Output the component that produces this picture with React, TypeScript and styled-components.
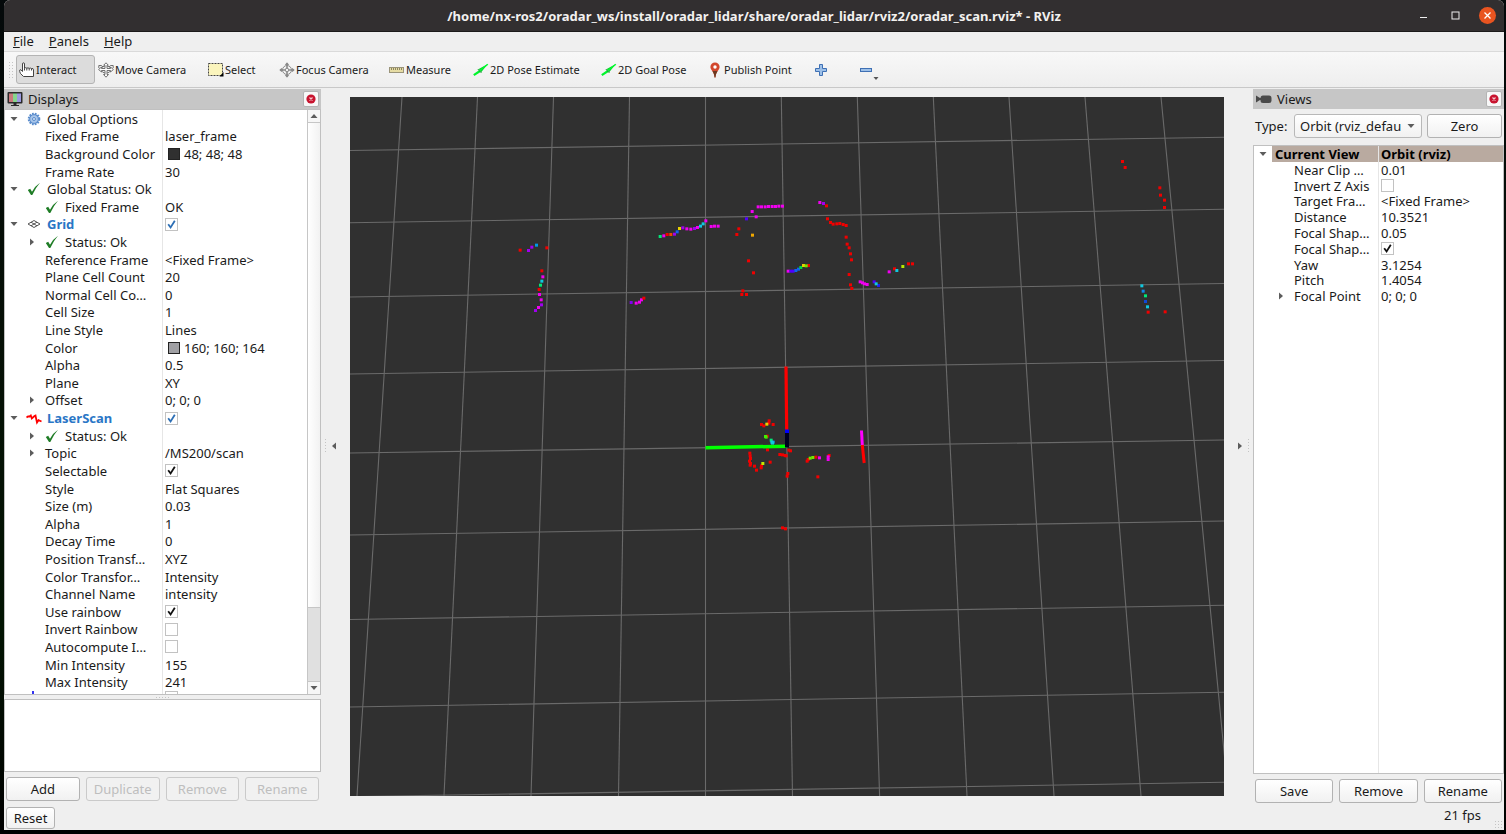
import React from "react";
import styled, { createGlobalStyle, css } from "styled-components";

const sans = `"Noto Sans", "Open Sans", "Liberation Sans", sans-serif`;

const GlobalStyle = createGlobalStyle`
  *, *::before, *::after { box-sizing: border-box; }
  html, body, #root { height: 100%; }
  body {
    margin: 0;
    background: #000;
    color: #1a1a1a;
    font: 13px/16px ${sans};
  }
  button, input, select { font: inherit; color: inherit; margin: 0; }
`;

/* ---------- window frame ---------- */

const Desktop = styled.div`
  display: flex;
  min-height: 100vh;
  padding: 0 2px 4px 4px;
  background: linear-gradient(180deg, #04090a 0%, #061006 40%, #021402 75%, #000 100%);
`;

const Window = styled.div`
  flex: 1;
  min-width: 0;
  display: flex;
  flex-direction: column;
  background: #efefef;
  border-radius: 6px 6px 0 0;
  overflow: hidden;
`;

const TitleBar = styled.header`
  display: grid;
  grid-template-columns: 90px 1fr 90px;
  align-items: center;
  height: 32px;
  background: #322f30;
  border-bottom: 1px solid #1c1a1a;
  color: #f2f1ef;
`;

const Title = styled.h1`
  grid-column: 2;
  margin: 0;
  text-align: center;
  white-space: nowrap;
  font-size: 13px;
  line-height: 18px;
  font-weight: 700;
`;

const WindowButtons = styled.div`
  display: flex;
  justify-content: flex-end;
  gap: 15px;
  padding-right: 8px;
`;

const WindowButton = styled.button<{ $close?: boolean }>`
  display: grid;
  place-items: center;
  width: 17px;
  height: 17px;
  padding: 0;
  border: 0;
  border-radius: 50%;
  background: ${(p) => (p.$close ? "#e95420" : "transparent")};
`;

const MenuBar = styled.nav`
  display: flex;
  gap: 15px;
  height: 20px;
  padding: 0 9px;
  border-bottom: 1px solid #dadada;
`;

const MenuItem = styled.button`
  padding: 0;
  border: 0;
  background: none;
  line-height: 19px;

  &::first-letter { text-decoration: underline; }
`;

const ToolBar = styled.div`
  display: flex;
  align-items: center;
  height: 36px;
  padding-left: 4px;
  background: linear-gradient(#f8f8f8, #eeeeee);
  border-bottom: 1px solid #c8c8c8;

  > :first-child { margin-right: 2px; }
`;

const Grip = styled.span<{ $w: number; $h: number }>`
  flex: none;
  width: ${(p) => p.$w}px;
  height: ${(p) => p.$h}px;
  background: radial-gradient(circle, #c4c4c4 1px, transparent 1px) 0 0 / 3px 3px;
`;

const ToolButton = styled.button<{ $w: number; $on?: boolean }>`
  position: relative;
  display: flex;
  align-items: center;
  gap: 1px;
  flex: none;
  width: ${(p) => p.$w}px;
  height: 29px;
  padding: 0 2px;
  border: 1px solid ${(p) => (p.$on ? "#b4b4b4" : "transparent")};
  border-radius: 3px;
  background: ${(p) => (p.$on ? "#dcdcdc" : "none")};
  font-size: 11px;
  white-space: nowrap;
  text-align: left;

  svg { flex: none; }
`;

const Corner = styled.svg`
  position: absolute;
  right: 1px;
  bottom: 2px;
`;

const Body = styled.div`
  flex: 1;
  min-height: 0;
  display: grid;
  grid-template-columns: 317px 29px 1fr 29px 251px;
`;

/* ---------- docks ---------- */

const Dock = styled.section<{ $bottom?: number }>`
  display: flex;
  flex-direction: column;
  min-width: 0;
  min-height: 0;
  padding-top: 1px;
  padding-bottom: ${(p) => p.$bottom ?? 0}px;
`;

const DockTitle = styled.header`
  display: flex;
  align-items: center;
  gap: 5px;
  flex: none;
  height: 20px;
  padding: 0 2px 0 3px;
  background: #c6c6c6;
`;

const DockName = styled.h2`
  flex: 1;
  margin: 0;
  font-size: 13px;
  line-height: 18px;
  font-weight: 400;
`;

const DockClose = styled.button`
  display: grid;
  place-items: center;
  width: 16px;
  height: 16px;
  padding: 0;
  border: 1px solid #b4b4b4;
  border-radius: 2px;
  background: #f8f8f8;
`;

const TreeFrame = styled.div`
  flex: 1;
  min-height: 0;
  display: flex;
  border: 1px solid #c0c0c0;
  background: #fff;
  overflow: hidden;
`;

const Tree = styled.div<{ $split: number }>`
  flex: 1;
  min-width: 0;
  display: flex;
  flex-direction: column;
  background: linear-gradient(#e6e6e6, #e6e6e6) ${(p) => p.$split - 1}px 0 / 1px 100% no-repeat;
`;

const Rows = styled.div<{ $height?: number }>`
  ${(p) => (p.$height ? css`flex: none; height: ${p.$height}px;` : css`flex: 1; min-height: 0;`)}
  display: grid;
  grid-auto-rows: minmax(0, 1fr);
`;

const Row = styled.div<{ $split: number }>`
  display: grid;
  grid-template-columns: ${(p) => p.$split}px minmax(0, 1fr);
  align-items: stretch;
  white-space: nowrap;
`;

const NameCell = styled.div<{ $strong?: boolean; $depth: 0 | 1 }>`
  display: flex;
  align-items: center;
  min-width: 0;
  padding-left: ${(p) => (p.$depth === 0 ? 5 : 23)}px;
  ${(p) => p.$strong && css`font-weight: 700; color: #2a76c6;`}
`;

const Selected = styled.span`
  flex: 1;
  align-self: stretch;
  display: flex;
  align-items: center;
  padding-left: 3px;
  margin-right: 1px;
  background: #b9aaa0;
  color: #000;
`;

const ValueCell = styled.div<{ $selected?: boolean }>`
  display: flex;
  align-items: center;
  min-width: 0;
  padding-left: 2px;
  ${(p) => p.$selected && css`background: #b9aaa0; color: #000; font-weight: 700;`}
`;

const ArrowSlot = styled.span<{ $gap: number }>`
  flex: none;
  display: grid;
  place-items: center;
  width: 8px;
  height: 8px;
  margin-right: ${(p) => p.$gap}px;
`;

const IconSlot = styled.span`
  flex: none;
  display: grid;
  place-items: center;
  width: 16px;
  height: 14px;
  margin-right: 5px;
`;

const Swatch = styled.span<{ $color: string }>`
  width: 12px;
  height: 12px;
  margin: 0 4px 0 3px;
  border: 1px solid #222;
  background: ${(p) => p.$color};
`;

const CheckWrap = styled.label`
  display: inline-grid;
  width: 13px;
  height: 13px;

  > * { grid-area: 1 / 1; }
  svg { pointer-events: none; }
`;

const CheckInput = styled.input`
  appearance: none;
  width: 13px;
  height: 13px;
  border: 1px solid #c2c2c2;
  background: #fff;
`;

const PartialRow = styled.div<{ $split: number }>`
  flex: none;
  display: grid;
  grid-template-columns: ${(p) => p.$split}px 1fr;
  height: 3px;
  overflow: hidden;
  padding-left: 2px;
`;

const AxesTip = styled.span`
  width: 2px;
  height: 3px;
  margin-left: 25px;
  background: #3434f0;
`;

const ScrollBar = styled.div`
  flex: none;
  display: grid;
  grid-template-rows: 12px 1fr 74px 12px;
  width: 13px;
  border-left: 1px solid #c6c6c6;
`;

const ScrollEnd = styled.button`
  display: grid;
  place-items: center;
  padding: 0;
  border: 0;
  background: #f6f6f6;
`;

const ScrollThumb = styled.div`
  border: solid #c6c6c6;
  border-width: 1px 0;
  background: linear-gradient(90deg, #fff, #f2f2f2);
`;

const ScrollGroove = styled.div`
  border-bottom: 1px solid #c6c6c6;
  background: #e0e0e0;
`;

const SplitHandle = styled.div`
  flex: none;
  display: grid;
  place-items: center;
  height: 4px;
`;

const HelpBox = styled.div`
  flex: none;
  height: 73px;
  border: 1px solid #c0c0c0;
  background: #fff;
`;

const ButtonRow = styled.div`
  display: grid;
  grid-auto-flow: column;
  grid-auto-columns: minmax(0, 1fr);
  gap: 6px;
  padding: 5px 2px 0 2px;
`;

const PushButton = styled.button<{ $small?: boolean }>`
  width: ${(p) => (p.$small ? "49px" : "100%")};
  height: ${(p) => (p.$small ? 22 : 24)}px;
  padding: 0;
  border: 1px solid #b2b2b2;
  border-radius: 3px;
  background: linear-gradient(#ffffff, #f1f1f1);
  line-height: 20px;
  text-align: center;

  &:disabled {
    border-color: #cacaca;
    background: #f1f1f1;
    color: #bebebe;
  }
`;

const TypeRow = styled.div`
  display: grid;
  grid-template-columns: 34px 128px 1fr;
  align-items: center;
  gap: 5px;
  padding: 5px 2px 7px 2px;
`;

const SelectWrap = styled.div`
  display: grid;
  align-items: center;

  > * { grid-area: 1 / 1; }
  svg { justify-self: end; margin-right: 7px; pointer-events: none; }
`;

const Select = styled.select`
  appearance: none;
  width: 100%;
  height: 24px;
  padding: 0 20px 0 5px;
  border: 1px solid #b8b8b8;
  border-radius: 3px;
  background: linear-gradient(#ffffff, #f1f1f1);
`;

const SideHandle = styled.div<{ $side: "left" | "right" }>`
  display: flex;
  flex-direction: ${(p) => (p.$side === "left" ? "row" : "row-reverse")};
  align-items: center;
  justify-content: flex-start;
  gap: 3px;
  padding: 0 3px;
`;

const HandleButton = styled.button`
  display: grid;
  place-items: center;
  padding: 0;
  border: 0;
  width: 8px;
  height: 24px;
  background: none;
`;

const CenterColumn = styled.main`
  display: grid;
  min-height: 0;
  min-width: 0;
  padding: 9px 0 7px;
`;

const Viewport = styled.svg`
  display: block;
  width: 100%;
  height: 100%;
  min-height: 0;
  background: #303030;
`;

const StatusBar = styled.footer`
  display: flex;
  justify-content: space-between;
  align-items: flex-start;
  flex: none;
  height: 27px;
  padding: 4px 1px 1px 2px;
`;

const StatusEnd = styled.div`
  align-self: stretch;
  display: flex;
  align-items: flex-start;
  gap: 13px;

  > :last-child { align-self: flex-end; }
`;

/* ---------- icons ---------- */

const Arrow = ({ dir }: { dir: "down" | "right" | "left" | "up" }) => {
  const d = {
    down: "M0.5 2H7.5L4 6Z",
    up: "M0.5 6H7.5L4 2Z",
    right: "M2 0.5V7.5L6 4Z",
    left: "M6 0.5V7.5L2 4Z",
  }[dir];
  return (
    <svg width="8" height="8" viewBox="0 0 8 8" aria-hidden="true">
      <path d={d} fill="#5c5c5c" />
    </svg>
  );
};

const HandIcon = () => (
  <svg width="16" height="16" viewBox="0 0 16 16" fill="#fff" stroke="#444" strokeWidth="1" strokeLinejoin="round">
    <path d="M3.500 9.500V2Q3.500 .8 4.500 .8T5.500 2V6.200Q6.700 5.200 7.800 6.200 9 5.400 10.200 6.400 11.300 5.600 12.500 6.600 14.500 6 14.500 7.800V14.500H4.500L1.500 11.500Q.3 9.500 .8 8T3.500 9.500Z" />
    <path d="M5.500 6.200V8.500M7.800 6.200V8.500M10.200 6.400V8.500M12.500 6.600V8.500" fill="none" />
  </svg>
);

const MoveIcon = () => (
  <svg width="16" height="16" viewBox="0 0 16 16" fill="#fff" stroke="#707070" strokeWidth="1">
    <ellipse cx="8" cy="7.500" rx="5" ry="3.500" fill="none" />
    <path d="M8 .8 10.300 3.200H9V6.500H12.500V5L15.400 7.500 12.500 10V8.500H9V12.500H10.500L8 15.200 5.500 12.500H7V8.500H3.500V10L.6 7.500 3.500 5V6.500H7V3.200H5.700Z" />
    <path d="M.8 3.500H3.500L5 5M15.200 3.500H12.500L11 5M.8 3.500V6M15.200 3.500V6" fill="none" />
  </svg>
);

const SelectIcon = () => (
  <svg width="16" height="16" viewBox="0 0 16 16">
    <rect x=".5" y="1.500" width="14" height="12" fill="#fbf5bd" stroke="#444" strokeDasharray="2 1" />
    <path d="M15.500 10V14.500H11.500Z" fill="#000" />
  </svg>
);

const FocusIcon = () => (
  <svg width="16" height="16" viewBox="0 0 16 16" fill="none" stroke="#8a8a8a" strokeWidth="1">
    <circle cx="8" cy="8" r="4.500" />
    <circle cx="8" cy="8" r="1.800" />
    <path d="M8 1V6.500M8 9.500V15M1 8H6.500M9.500 8H15" strokeWidth="1.600" />
    <path d="M6.500 2.500 8 .8 9.500 2.500ZM6.500 13.500 8 15.200 9.500 13.500ZM2.500 6.500.8 8 2.500 9.500ZM13.500 6.500 15.200 8 13.500 9.500Z" fill="#a4a4a4" />
  </svg>
);

const RulerIcon = () => (
  <svg width="16" height="16" viewBox="0 0 16 16">
    <rect x=".5" y="5.500" width="14" height="5" fill="#e6dca4" stroke="#9a947a" />
    <path d="M2.500 6V8M4.500 6V8M6.500 6V8M8.500 6V8M10.500 6V8M12.500 6V8" stroke="#8c8660" />
  </svg>
);

const PoseIcon = () => (
  <svg width="16" height="16" viewBox="0 0 16 16">
    <path d="M.8 13.200 7 9" stroke="#00f52c" strokeWidth="2.200" />
    <path d="M14.800 2 4.800 7.500 7 8 8 10.500Z" fill="#0cd030" />
    <path d="M5 7.300 8.300 10.800" stroke="#0a8c28" strokeWidth="1" />
    <path d="M14.800 2.200 7 8.500" stroke="#00ff2e" strokeWidth="1.400" />
  </svg>
);

const PinIcon = () => (
  <svg width="16" height="16" viewBox="0 0 16 16">
    <path d="M8 .5A4.600 4.600 0 0 0 3.400 5.100C3.400 8 7 9.500 7.600 15.500H8.400C9 9.500 12.600 8 12.600 5.100A4.600 4.600 0 0 0 8 .5Z" fill="#d2472d" />
    <path d="M5.500 9Q7 11 7.600 15.500H8.400Q9 11 10.500 9Z" fill="#6b3a22" />
    <circle cx="8" cy="5" r="1.700" fill="#fff" />
  </svg>
);

const PlusIcon = () => (
  <svg width="16" height="16" viewBox="0 0 16 16">
    <path d="M6.500 2.500H9.500V6.500H13.500V9.500H9.500V13.500H6.500V9.500H2.500V6.500H6.500Z" fill="#9dc0e8" stroke="#3f70b4" />
  </svg>
);

const MinusIcon = () => (
  <svg width="16" height="16" viewBox="0 0 16 16">
    <rect x="2.500" y="6.500" width="11" height="3" fill="#9dc0e8" stroke="#3f70b4" />
  </svg>
);

const MonitorIcon = () => (
  <svg width="16" height="16" viewBox="0 0 16 16">
    <rect x=".5" y="1" width="15" height="11.500" rx="1" fill="#2a2a2a" />
    <rect x="2" y="2.500" width="4" height="8.500" fill="#c9797c" />
    <rect x="6" y="2.500" width="4" height="8.500" fill="#86d58c" />
    <rect x="10" y="2.500" width="4" height="8.500" fill="#9c99e0" />
    <path d="M6.500 12H9.500V14H12V15H4V14H6.500Z" fill="#2a2a2a" />
  </svg>
);

const CameraIcon = () => (
  <svg width="16" height="16" viewBox="0 0 16 16" fill="#4a4a4a">
    <path d="M0 4.500 4 7V9L0 11.500Z" />
    <rect x="4.500" y="4.500" width="11" height="7.500" rx="2.500" />
    <path d="M4 7H5V9H4Z" />
  </svg>
);

const CloseDot = () => (
  <svg width="10" height="10" viewBox="0 0 10 10">
    <circle cx="5" cy="5" r="4.600" fill="#c8142f" />
    <path d="M3.500 3.500 6.500 6.500M6.500 3.500 3.500 6.500" stroke="#f6c8cf" strokeWidth="1.200" />
  </svg>
);

const GearIcon = () => (
  <svg width="14" height="14" viewBox="0 0 14 14">
    <circle cx="7" cy="7" r="5.300" fill="#a9c6ea" stroke="#5a8ccc" strokeWidth="2" strokeDasharray="1.700 1.100" />
    <circle cx="7" cy="7" r="4.300" fill="#a9c6ea" stroke="#5a8ccc" />
    <circle cx="7" cy="7" r="1.500" fill="#dbe8f7" stroke="#5a8ccc" />
  </svg>
);

const TickIcon = () => (
  <svg width="14" height="14" viewBox="0 0 14 14">
    <path d="M.8 8 3.200 6.800 5 9.800 Q8 4 13 .8 8.500 6 5.300 13H4Z" fill="#1f7d26" />
  </svg>
);

const GridIcon = () => (
  <svg width="14" height="14" viewBox="0 0 14 14" fill="none" stroke="#555">
    <path d="M1 7 7 3.500 13 7 7 10.500ZM4 5.200 10 8.800M10 5.200 4 8.800" />
  </svg>
);

const ScanIcon = () => (
  <svg width="16" height="14" viewBox="0 0 16 14" fill="none" stroke="#f00" strokeWidth="1.800">
    <path d="M.5 6.500 2 5.500 3.500 5.500 4.800 4.500 5.800 7.500 8.500 5 9.500 4.500 10 7 11 11.500 12.500 9.200 15.500 10.500" />
  </svg>
);

/* ---------- property trees ---------- */

type IconName = "gear" | "tick" | "grid" | "scan";
type Prop = {
  name: string;
  value?: string;
  check?: "on" | "off" | "blue";
  swatch?: string;
  depth: 0 | 1;
  arrow?: "down" | "right";
  icon?: IconName;
  strong?: boolean;
};

const icons: Record<IconName, React.ReactNode> = {
  gear: <GearIcon />,
  tick: <TickIcon />,
  grid: <GridIcon />,
  scan: <ScanIcon />,
};

const displayProps: Prop[] = [
  { name: "Global Options", depth: 0, arrow: "down", icon: "gear" },
  { name: "Fixed Frame", value: "laser_frame", depth: 1 },
  { name: "Background Color", value: "48; 48; 48", swatch: "#303030", depth: 1 },
  { name: "Frame Rate", value: "30", depth: 1 },
  { name: "Global Status: Ok", depth: 0, arrow: "down", icon: "tick" },
  { name: "Fixed Frame", value: "OK", depth: 1, icon: "tick" },
  { name: "Grid", check: "blue", depth: 0, arrow: "down", icon: "grid", strong: true },
  { name: "Status: Ok", depth: 1, arrow: "right", icon: "tick" },
  { name: "Reference Frame", value: "<Fixed Frame>", depth: 1 },
  { name: "Plane Cell Count", value: "20", depth: 1 },
  { name: "Normal Cell Co…", value: "0", depth: 1 },
  { name: "Cell Size", value: "1", depth: 1 },
  { name: "Line Style", value: "Lines", depth: 1 },
  { name: "Color", value: "160; 160; 164", swatch: "#a0a0a4", depth: 1 },
  { name: "Alpha", value: "0.5", depth: 1 },
  { name: "Plane", value: "XY", depth: 1 },
  { name: "Offset", value: "0; 0; 0", depth: 1, arrow: "right" },
  { name: "LaserScan", check: "blue", depth: 0, arrow: "down", icon: "scan", strong: true },
  { name: "Status: Ok", depth: 1, arrow: "right", icon: "tick" },
  { name: "Topic", value: "/MS200/scan", depth: 1, arrow: "right" },
  { name: "Selectable", check: "on", depth: 1 },
  { name: "Style", value: "Flat Squares", depth: 1 },
  { name: "Size (m)", value: "0.03", depth: 1 },
  { name: "Alpha", value: "1", depth: 1 },
  { name: "Decay Time", value: "0", depth: 1 },
  { name: "Position Transf…", value: "XYZ", depth: 1 },
  { name: "Color Transfor…", value: "Intensity", depth: 1 },
  { name: "Channel Name", value: "intensity", depth: 1 },
  { name: "Use rainbow", check: "on", depth: 1 },
  { name: "Invert Rainbow", check: "off", depth: 1 },
  { name: "Autocompute I…", check: "off", depth: 1 },
  { name: "Min Intensity", value: "155", depth: 1 },
  { name: "Max Intensity", value: "241", depth: 1 },
];

const viewProps: Prop[] = [
  { name: "Near Clip …", value: "0.01", depth: 1 },
  { name: "Invert Z Axis", check: "off", depth: 1 },
  { name: "Target Fra…", value: "<Fixed Frame>", depth: 1 },
  { name: "Distance", value: "10.3521", depth: 1 },
  { name: "Focal Shap…", value: "0.05", depth: 1 },
  { name: "Focal Shap…", check: "on", depth: 1 },
  { name: "Yaw", value: "3.1254", depth: 1 },
  { name: "Pitch", value: "1.4054", depth: 1 },
  { name: "Focal Point", value: "0; 0; 0", depth: 1, arrow: "right" },
];

const Check = ({ kind, label }: { kind: "on" | "off" | "blue"; label: string }) => (
  <CheckWrap>
    <CheckInput type="checkbox" aria-label={label} defaultChecked={kind !== "off"} />
    {kind !== "off" && (
      <svg width="13" height="13" viewBox="0 0 13 13" fill="none" stroke={kind === "blue" ? "#2d6fb5" : "#111"} strokeWidth="1.800">
        <path d="M3.200 6.200 5.600 9.500 9.800 2.800" />
      </svg>
    )}
  </CheckWrap>
);

const PropertyRow = ({ item, split }: { item: Prop; split: number }) => (
  <Row role="row" $split={split}>
    <NameCell role="gridcell" $strong={item.strong} $depth={item.depth}>
      <ArrowSlot $gap={item.icon ? 8 : 9}>{item.arrow && <Arrow dir={item.arrow} />}</ArrowSlot>
      {item.icon && <IconSlot>{icons[item.icon]}</IconSlot>}
      <span>{item.name}</span>
    </NameCell>
    <ValueCell role="gridcell">
      {item.swatch && <Swatch $color={item.swatch} />}
      {item.check ? <Check kind={item.check} label={item.name} /> : item.value}
    </ValueCell>
  </Row>
);

/* ---------- laser scan scene ---------- */

const R = "#f00000", M = "#f000f0", P = "#a000f0", B = "#1060f0", C = "#10c8e0", G = "#00e878", Y = "#e8d000", L = "#70e800", O = "#f04800", V = "#5000ff";

type Cloud = { x: number; y: number; points: [number, number, string][] };

/* Coordinates inside each cloud are in thirds of a scene unit. */
const clouds: Cloud[] = [
  {
    x: 500, y: 180,
    points: [
      [60, 210, R], [85, 211, P], [95, 201, P], [109, 195, "#0098e8"], [140, 203, R],
      [125, 272, R], [128, 290, M], [125, 303, C], [121, 315, G], [117, 328, R], [118, 343, M],
      [123, 359, M], [124, 374, P], [115, 382, M], [106, 391, P],
      [480, 169, G], [491, 167, M], [501, 163, R], [512, 163, O], [523, 162, P], [531, 155, B],
      [538, 145, Y], [548, 143, P], [560, 146, M], [572, 147, M], [583, 145, P], [592, 142, M],
      [601, 138, C], [609, 131, C], [617, 122, M], [633, 139, M], [643, 138, M], [654, 138, M],
      [393, 367, "#8000f0"], [408, 369, M], [418, 366, M], [424, 359, M], [431, 354, R],
    ],
  },
  {
    x: 720, y: 180,
    points: [
      [114, 80, M], [124, 80, M], [135, 80, M], [145, 79, M], [156, 79, M], [166, 79, M], [176, 78, M], [187, 78, M],
      [96, 94, M], [108, 110, M], [79, 116, V], [56, 146, R], [50, 163, R], [97, 165, "#f0a800"],
      [85, 242, R], [100, 278, R], [68, 332, R], [65, 343, R], [79, 343, R],
      [204, 273, M], [212, 273, V], [219, 273, V], [227, 271, B], [235, 267, B], [242, 262, "#00d840"],
      [265, 256, R], [250, 256, Y], [258, 257, L],
      [299, 67, M], [310, 70, P], [319, 77, R], [322, 116, R], [331, 127, R], [339, 132, R], [350, 131, R],
      [359, 130, R], [369, 133, R], [378, 136, R], [378, 171, R], [381, 192, R], [387, 203, R], [391, 221, R],
      [394, 239, R], [387, 283, R], [391, 314, R], [395, 325, R],
      [420, 305, M], [427, 308, M], [433, 311, M], [441, 313, M], [462, 305, V], [475, 316, "#2020f0"], [468, 311, C],
      [507, 275, M], [523, 266, R], [530, 271, C], [548, 259, "#b8e800"], [565, 251, R], [577, 251, R],
    ],
  },
  {
    x: 680, y: 350,
    points: [
      [244, 223, R], [251, 227, R], [267, 212, R], [266, 219, R], [260, 222, Y], [279, 223, R],
      [261, 258, R], [258, 261, "#40f000"], [256, 259, "#40f000"], [273, 270, G], [279, 276, "#10a0f0"], [275, 276, C], [277, 279, C], [262, 299, R],
      [209, 309, R], [210, 317, R], [211, 325, R], [208, 333, R], [211, 340, R], [210, 345, R], [223, 348, R], [229, 360, R],
      [243, 353, R], [244, 347, R], [248, 340, "#c8e800"], [270, 336, R],
      [299, 313, R], [307, 314, R], [315, 316, R], [318, 317, R], [326, 300, R], [331, 302, R],
      [323, 370, R], [321, 378, R], [307, 533, R], [316, 536, R],
      [381, 333, R], [384, 328, R], [407, 321, R], [390, 324, L], [398, 322, L], [418, 323, M],
      [447, 316, R], [444, 320, M], [444, 328, M], [413, 380, R],
    ],
  },
  {
    x: 1080, y: 130,
    points: [
      [127, 94, R], [135, 112, R], [239, 173, R], [241, 195, R], [253, 210, R], [253, 232, R],
      [185, 467, C], [189, 483, "#1088e8"], [196, 497, G], [196, 514, "#1048d8"], [202, 530, C], [204, 546, R], [255, 545, R],
    ],
  },
];

const verticals: [number, number][] = [
  [402, 357], [477.5, 444], [553.5, 531], [629.5, 618.5], [705.5, 705.5], [781.3, 792.5],
  [857.3, 879.6], [933.3, 967], [1009, 1054], [1085, 1141], [1161, 1228.3],
];

const horizontals: [number, number][] = [
  [150.5, 137.3], [222.7, 209.3], [297, 283.5], [374, 360.5], [453, 440], [535, 521], [619.5, 605.3], [707, 692.3], [796.700, 782.3],
];

const Scene = () => (
  <Viewport viewBox="350 97 874 699" preserveAspectRatio="xMidYMid slice" role="img" aria-label="3D view">
    <g stroke="#6a6a6a" strokeWidth="1.100">
      {verticals.map(([a, b]) => <line key={a} x1={a} y1={97} x2={b} y2={796} />)}
      {horizontals.map(([a, b]) => <line key={a} x1={350} y1={a} x2={1224} y2={b} />)}
    </g>
    {clouds.map((c) => (
      <g key={`${c.x}-${c.y}`} transform={`translate(${c.x} ${c.y}) scale(${1 / 3})`}>
        {c.points.map(([x, y, color], i) => (
          <rect key={i} x={x - 4} y={y - 4} width={9} height={9} fill={color} />
        ))}
      </g>
    ))}
    <g fill="none">
      <path d="M861.500 430.500 862.300 445" stroke="#f0f" strokeWidth="3" />
      <path d="M862.300 445 864.200 463" stroke="#f00" strokeWidth="3" />
      <path d="M705.500 447.700 787 446.200" stroke="#0f0" strokeWidth="3.500" />
      <path d="M786 366.500 786.700 430" stroke="#f00" strokeWidth="3.200" />
      <path d="M787 430 787 447.500" stroke="#000020" strokeWidth="4" />
      <path d="M787 429.500V433" stroke="#00f" strokeWidth="4" />
    </g>
  </Viewport>
);

/* ---------- page ---------- */

const tools: { label: string; w: number; icon: React.ReactNode; on?: boolean }[] = [
  { label: "Interact", w: 79, icon: <HandIcon />, on: true },
  { label: "Move Camera", w: 110, icon: <MoveIcon /> },
  { label: "Select", w: 71, icon: <SelectIcon /> },
  { label: "Focus Camera", w: 110, icon: <FocusIcon /> },
  { label: "Measure", w: 84, icon: <RulerIcon /> },
  { label: "2D Pose Estimate", w: 128, icon: <PoseIcon /> },
  { label: "2D Goal Pose", w: 106, icon: <PoseIcon /> },
  { label: "Publish Point", w: 106, icon: <PinIcon /> },
];

const LEFT_SPLIT = 158;
const RIGHT_SPLIT = 125;

export default function App() {
  return (
    <>
      <GlobalStyle />
      <Desktop>
        <Window>
          <TitleBar>
            <Title>/home/nx-ros2/oradar_ws/install/oradar_lidar/share/oradar_lidar/rviz2/oradar_scan.rviz* - RViz</Title>
            <WindowButtons>
              <WindowButton aria-label="Minimize">
                <svg width="9" height="9" viewBox="0 0 9 9"><path d="M1 6.500H8" stroke="#eee" /></svg>
              </WindowButton>
              <WindowButton aria-label="Maximize">
                <svg width="9" height="9" viewBox="0 0 9 9"><rect x="1" y="1" width="7" height="7" fill="none" stroke="#eee" /></svg>
              </WindowButton>
              <WindowButton $close aria-label="Close">
                <svg width="9" height="9" viewBox="0 0 9 9"><path d="M1.500 1.500 7.500 7.500M7.500 1.500 1.500 7.500" stroke="#fff" strokeWidth="1.300" /></svg>
              </WindowButton>
            </WindowButtons>
          </TitleBar>
          <MenuBar>
            <MenuItem>File</MenuItem>
            <MenuItem>Panels</MenuItem>
            <MenuItem>Help</MenuItem>
          </MenuBar>
          <ToolBar role="toolbar">
            <Grip $w={6} $h={18} />
            {tools.map((t) => (
              <ToolButton key={t.label} $w={t.w} $on={t.on}>{t.icon}{t.label}</ToolButton>
            ))}
            <ToolButton $w={45} aria-label="Add tool"><PlusIcon /></ToolButton>
            <ToolButton $w={26} aria-label="Remove tool">
              <MinusIcon />
              <Corner width="6" height="4" viewBox="0 0 6 4"><path d="M.5 0H5.500L3 3Z" fill="#555" /></Corner>
            </ToolButton>
          </ToolBar>
          <Body>
            <Dock $bottom={2}>
              <DockTitle>
                <MonitorIcon />
                <DockName>Displays</DockName>
                <DockClose aria-label="Close Displays"><CloseDot /></DockClose>
              </DockTitle>
              <TreeFrame>
                <Tree role="treegrid" aria-label="Displays" $split={LEFT_SPLIT}>
                  <Rows>
                    {displayProps.map((p, i) => <PropertyRow key={i} item={p} split={LEFT_SPLIT} />)}
                  </Rows>
                  <PartialRow $split={LEFT_SPLIT}>
                    <AxesTip />
                    <Check kind="off" label="Axes" />
                  </PartialRow>
                </Tree>
                <ScrollBar>
                  <ScrollEnd aria-label="Scroll up"><Arrow dir="up" /></ScrollEnd>
                  <ScrollThumb />
                  <ScrollGroove />
                  <ScrollEnd aria-label="Scroll down"><Arrow dir="down" /></ScrollEnd>
                </ScrollBar>
              </TreeFrame>
              <SplitHandle><Grip $w={15} $h={3} /></SplitHandle>
              <HelpBox />
              <ButtonRow>
                <PushButton>Add</PushButton>
                <PushButton disabled>Duplicate</PushButton>
                <PushButton disabled>Remove</PushButton>
                <PushButton disabled>Rename</PushButton>
              </ButtonRow>
            </Dock>
            <SideHandle $side="left">
              <Grip $w={3} $h={16} />
              <HandleButton aria-label="Hide left dock"><Arrow dir="left" /></HandleButton>
            </SideHandle>
            <CenterColumn><Scene /></CenterColumn>
            <SideHandle $side="right">
              <Grip $w={3} $h={16} />
              <HandleButton aria-label="Hide right dock"><Arrow dir="right" /></HandleButton>
            </SideHandle>
            <Dock>
              <DockTitle>
                <CameraIcon />
                <DockName>Views</DockName>
                <DockClose aria-label="Close Views"><CloseDot /></DockClose>
              </DockTitle>
              <TypeRow>
                <label htmlFor="view-type">Type:</label>
                <SelectWrap>
                  <Select id="view-type"><option>Orbit (rviz_default_plugins)</option></Select>
                  <Arrow dir="down" />
                </SelectWrap>
                <PushButton>Zero</PushButton>
              </TypeRow>
              <TreeFrame>
                <Tree role="treegrid" aria-label="Views" $split={RIGHT_SPLIT}>
                  <Rows $height={158}>
                    <Row role="row" $split={RIGHT_SPLIT}>
                      <NameCell role="gridcell" $depth={0}>
                        <ArrowSlot $gap={5}><Arrow dir="down" /></ArrowSlot>
                        <Selected><b>Current View</b></Selected>
                      </NameCell>
                      <ValueCell role="gridcell" $selected>Orbit (rviz)</ValueCell>
                    </Row>
                    {viewProps.map((p, i) => <PropertyRow key={i} item={p} split={RIGHT_SPLIT} />)}
                  </Rows>
                </Tree>
              </TreeFrame>
              <ButtonRow>
                <PushButton>Save</PushButton>
                <PushButton>Remove</PushButton>
                <PushButton>Rename</PushButton>
              </ButtonRow>
            </Dock>
          </Body>
          <StatusBar>
            <PushButton $small>Reset</PushButton>
            <StatusEnd>
              <span>21 fps</span>
              <Grip $w={9} $h={9} />
            </StatusEnd>
          </StatusBar>
        </Window>
      </Desktop>
    </>
  );
}
